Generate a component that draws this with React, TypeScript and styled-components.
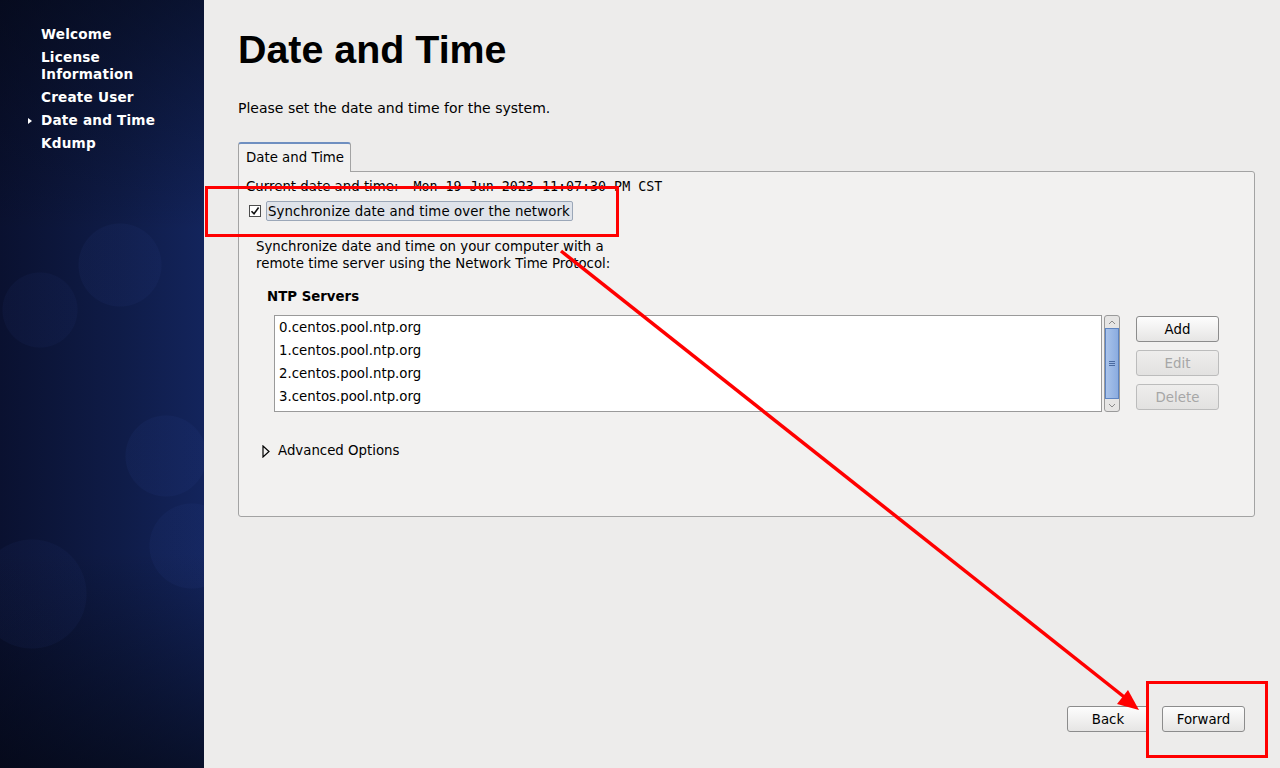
import * as React from 'react';
import styled, { createGlobalStyle } from 'styled-components';

const GlobalStyle = createGlobalStyle`
  html, body {
    margin: 0;
    padding: 0;
  }
  body {
    font-family: "DejaVu Sans", "Liberation Sans", sans-serif;
    font-size: 13.33px;
    color: #000;
    background: #edeceb;
  }
`;

const Page = styled.div`
  position: relative;
  width: 1280px;
  height: 768px;
  display: grid;
  grid-template-columns: 204px 1fr;
  overflow: hidden;
`;

const Sidebar = styled.div`
  background:
    radial-gradient(circle at 120px 265px, rgba(40, 60, 130, 0.13) 41px, transparent 42px),
    radial-gradient(circle at 40px 310px, rgba(40, 60, 130, 0.1) 37px, transparent 38px),
    radial-gradient(circle at 166px 456px, rgba(40, 64, 140, 0.13) 40px, transparent 41px),
    radial-gradient(circle at 192px 546px, rgba(40, 64, 140, 0.12) 42px, transparent 43px),
    radial-gradient(circle at 32px 594px, rgba(40, 60, 130, 0.1) 54px, transparent 55px),
    linear-gradient(to bottom, rgba(3, 6, 16, 0.55) 0%, rgba(3, 6, 16, 0) 30%, rgba(3, 6, 16, 0) 72%, rgba(3, 6, 16, 0.65) 100%),
    linear-gradient(to right, #0a1130 0%, #0f1c48 60%, #13245c 100%);
  padding: 26px 0 0 0;
`;

const NavList = styled.ul`
  list-style: none;
  margin: 0;
  padding: 0 0 0 41px;
  width: 120px;
`;

const NavItem = styled.li<{ $active?: boolean }>`
  position: relative;
  color: #fff;
  font-weight: bold;
  font-size: 13.6px;
  line-height: 17px;
  margin-bottom: 6px;
  letter-spacing: 0.2px;

  &::before {
    content: '';
    display: ${(p) => (p.$active ? 'block' : 'none')};
    position: absolute;
    left: -13px;
    top: 6px;
    border-left: 4px solid #fff;
    border-top: 3px solid transparent;
    border-bottom: 3px solid transparent;
  }
`;

const Main = styled.div`
  display: flex;
  flex-direction: column;
  padding: 27px 25px 36px 34px;
`;

const Title = styled.h1`
  margin: 0;
  font-family: "Liberation Sans", Arial, sans-serif;
  font-weight: bold;
  font-size: 39.4px;
  line-height: 45px;
`;

const Intro = styled.p`
  margin: 28px 0 0 0;
  font-size: 14px;
  line-height: 16px;
`;

const Tabs = styled.div`
  margin-top: 26px;
  display: flex;
`;

const Tab = styled.div`
  height: 30px;
  box-sizing: border-box;
  padding: 0 6px 2px 7px;
  display: flex;
  align-items: center;
  background: #f2f1f0;
  border: 1px solid #a3a3a3;
  border-top: 2px solid #6f8fc0;
  border-bottom: none;
  border-radius: 3px 3px 0 0;
  margin-bottom: -1px;
  position: relative;
  z-index: 1;
`;

const Panel = styled.div`
  height: 346px;
  box-sizing: border-box;
  background: #f2f1f0;
  border: 1px solid #a3a3a3;
  border-radius: 0 3px 3px 3px;
  padding: 7px 0 0 7px;
  display: flex;
  flex-direction: column;
`;

const CurrentRow = styled.div`
  display: flex;
  gap: 15px;
  line-height: 16px;
`;

const Mono = styled.span`
  font-family: "DejaVu Sans Mono", "Liberation Mono", monospace;
  font-size: 13.33px;
`;

const CheckRow = styled.div`
  margin-top: 6px;
  margin-left: 3px;
  display: flex;
  align-items: center;
  gap: 5px;
`;

const CheckBox = styled.span`
  width: 12px;
  height: 12px;
  box-sizing: border-box;
  border: 1px solid #4d4d4d;
  background: #fff;
  display: flex;
  align-items: center;
  justify-content: center;
`;

const FocusLabel = styled.span`
  height: 20px;
  box-sizing: border-box;
  padding: 0 2px 0 1px;
  display: flex;
  align-items: center;
  background: #dfe3ea;
  border: 1px solid #9ba7b8;
  border-radius: 2px;
  letter-spacing: 0.1px;
`;

const Description = styled.p`
  margin: 17px 0 0 10px;
  line-height: 17px;
`;

const SectionHead = styled.div`
  margin: 17px 0 0 21px;
  font-weight: bold;
  line-height: 16px;
`;

const ServerArea = styled.div`
  margin: 10px 0 0 28px;
  display: flex;
  align-items: flex-start;
`;

const ListBox = styled.div`
  width: 828px;
  height: 97px;
  box-sizing: border-box;
  background: #fff;
  border: 1px solid #9a9a9a;
  padding: 0 0 0 4px;
`;

const ListRow = styled.div`
  height: 23px;
  line-height: 23px;
`;

const ScrollBar = styled.div`
  margin-left: 2px;
  width: 16px;
  height: 97px;
  box-sizing: border-box;
  border: 1px solid #9a9a9a;
  border-radius: 3px;
  background: #e6e5e4;
  display: flex;
  flex-direction: column;
  align-items: center;
`;

const ScrollArrow = styled.div`
  height: 12px;
  width: 100%;
  display: flex;
  align-items: center;
  justify-content: center;
`;

const Thumb = styled.div`
  flex: 1;
  width: 14px;
  box-sizing: border-box;
  background: linear-gradient(to right, #a9c3ea, #8bace0);
  border: 1px solid #5d84c2;
  display: flex;
  align-items: center;
  justify-content: center;
`;

const ButtonCol = styled.div`
  margin-left: 16px;
  display: flex;
  flex-direction: column;
  gap: 8px;
  margin-top: 1px;
`;

const Button = styled.button<{ $w?: number }>`
  width: ${(p) => p.$w ?? 83}px;
  height: 26px;
  box-sizing: border-box;
  font-family: "DejaVu Sans", "Liberation Sans", sans-serif;
  font-size: 13.33px;
  color: ${(p) => (p.disabled ? '#a6a6a6' : '#000')};
  background: ${(p) =>
    p.disabled
      ? 'linear-gradient(to bottom, #eeedec, #e2e1e0)'
      : 'linear-gradient(to bottom, #fdfdfd, #e6e5e4)'};
  border: 1px solid ${(p) => (p.disabled ? '#bcbcbc' : '#8c8c8c')};
  border-radius: 3px;
  padding: 0;
`;

const Expander = styled.div`
  margin: 31px 0 0 16px;
  display: flex;
  align-items: center;
  gap: 8px;
  line-height: 16px;
`;

const Footer = styled.div`
  margin-top: auto;
  margin-right: 10px;
  display: flex;
  justify-content: flex-end;
  gap: 13px;
`;

const Overlay = styled.svg`
  position: absolute;
  left: 0;
  top: 0;
  pointer-events: none;
`;

const servers = [
  '0.centos.pool.ntp.org',
  '1.centos.pool.ntp.org',
  '2.centos.pool.ntp.org',
  '3.centos.pool.ntp.org',
];

export default function App() {
  return (
    <>
      <GlobalStyle />
      <Page>
        <Sidebar>
          <NavList>
            <NavItem>Welcome</NavItem>
            <NavItem>License Information</NavItem>
            <NavItem>Create User</NavItem>
            <NavItem $active>Date and Time</NavItem>
            <NavItem>Kdump</NavItem>
          </NavList>
        </Sidebar>
        <Main>
          <Title>Date and Time</Title>
          <Intro>Please set the date and time for the system.</Intro>
          <Tabs>
            <Tab>Date and Time</Tab>
          </Tabs>
          <Panel>
            <CurrentRow>
              <span>Current date and time:</span>
              <Mono>Mon 19 Jun 2023 11:07:30 PM CST</Mono>
            </CurrentRow>
            <CheckRow>
              <CheckBox>
                <svg width="10" height="10" viewBox="0 0 10 10">
                  <path d="M1.5 5.2 L4 7.8 L8.6 1.6" fill="none" stroke="#111" strokeWidth="1.6" />
                </svg>
              </CheckBox>
              <FocusLabel>Synchronize date and time over the network</FocusLabel>
            </CheckRow>
            <Description>
              Synchronize date and time on your computer with a
              <br />
              remote time server using the Network Time Protocol:
            </Description>
            <SectionHead>NTP Servers</SectionHead>
            <ServerArea>
              <ListBox>
                {servers.map((s) => (
                  <ListRow key={s}>{s}</ListRow>
                ))}
              </ListBox>
              <ScrollBar>
                <ScrollArrow>
                  <svg width="8" height="5" viewBox="0 0 8 5">
                    <path d="M1 4 L4 1 L7 4" fill="none" stroke="#8a8a8a" strokeWidth="1" />
                  </svg>
                </ScrollArrow>
                <Thumb>
                  <svg width="6" height="7" viewBox="0 0 6 7">
                    <path d="M0 1.5 H6 M0 3.5 H6 M0 5.5 H6" stroke="#4a6aa0" strokeWidth="1" />
                  </svg>
                </Thumb>
                <ScrollArrow>
                  <svg width="8" height="5" viewBox="0 0 8 5">
                    <path d="M1 1 L4 4 L7 1" fill="none" stroke="#8a8a8a" strokeWidth="1" />
                  </svg>
                </ScrollArrow>
              </ScrollBar>
              <ButtonCol>
                <Button>Add</Button>
                <Button disabled>Edit</Button>
                <Button disabled>Delete</Button>
              </ButtonCol>
            </ServerArea>
            <Expander>
              <svg width="8" height="13" viewBox="0 0 8 13">
                <path d="M1 1 L7 6.5 L1 12 Z" fill="none" stroke="#000" strokeWidth="1.2" />
              </svg>
              <span>Advanced Options</span>
            </Expander>
          </Panel>
          <Footer>
            <Button $w={82}>Back</Button>
            <Button>Forward</Button>
          </Footer>
        </Main>
        <Overlay width="1280" height="768" viewBox="0 0 1280 768">
          <rect x="206.5" y="187.5" width="411" height="48" fill="none" stroke="#ff0000" strokeWidth="3" />
          <rect x="1147.5" y="682.5" width="119" height="74" fill="none" stroke="#ff0000" strokeWidth="3" />
          <line x1="561" y1="251" x2="1128" y2="700" stroke="#ff0000" strokeWidth="3.5" />
          <path d="M1139 710 L1117 704 L1128 690 Z" fill="#ff0000" />
        </Overlay>
      </Page>
    </>
  );
}
